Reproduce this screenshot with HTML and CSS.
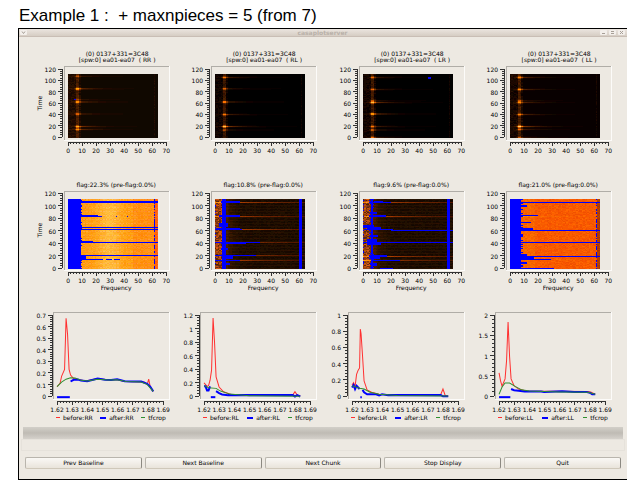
FILE: index.html
```
<!DOCTYPE html>
<html lang="en">
  <head>
    <meta charset="UTF-8" />
    <meta name="viewport" content="width=device-width, initial-scale=1.0" />
    <title>casaplotserver</title>
    <link rel="stylesheet" href="styles.css">
  </head>
  <body>
    <h1>Example 1 :&nbsp; + maxnpieces = 5 (from 7)</h1>

    <main class="window">
      <header class="titlebar">
        <button class="win-btn" aria-label="Menu">
          <svg viewBox="0 0 7 5"><path d="M2 1.5l1.5 2l1.5-2" /></svg>
        </button>
        <span class="win-title">casaplotserver</span>
        <div class="win-controls">
          <button class="win-btn" aria-label="Minimize">
            <svg viewBox="0 0 7 5"><path d="M2 3.5h3" /></svg>
          </button>
          <button class="win-btn" aria-label="Maximize">
            <svg viewBox="0 0 7 5"><path d="M2 1.5h3M2 3.5h3" /></svg>
          </button>
          <button class="win-btn" aria-label="Close">
            <svg viewBox="0 0 7 5"><path d="M2 1l3 3M5 1l-3 3" /></svg>
          </button>
        </div>
      </header>

      <div class="plots" id="plots"></div>

      <div class="toolbar"></div>
      <div class="statusbar"></div>

      <div class="buttons">
        <button class="btn">Prev Baseline</button>
        <button class="btn">Next Baseline</button>
        <button class="btn">Next Chunk</button>
        <button class="btn">Stop Display</button>
        <button class="btn">Quit</button>
      </div>
    </main>

    <script src="charts.js"></script>
  </body>
</html>
```
FILE: styles.css
```
* {
  margin: 0;
  padding: 0;
  box-sizing: border-box;
}

body {
  background: #fff;
  font-family: "DejaVu Sans", Verdana, sans-serif;
  font-size: 6px;
  color: #000;
}

h1 {
  padding: 6px 18px 2px 19px;
  font-family: "Liberation Sans", Arial, sans-serif;
  font-size: 17px;
  font-weight: normal;
  line-height: 20px;
}

.window {
  margin: 0 13px 0 18px;
  background: #ede9e2;
  border: 1px solid #000;
  border-right: none;
}

.titlebar {
  display: flex;
  align-items: center;
  justify-content: space-between;
  height: 8px;
  padding: 0 2px 0 1px;
  background: linear-gradient(#ebe5df, #d6cdc4);
  border-bottom: 1px solid #c9beb5;
}

.win-title {
  padding-left: 18px;
  font-weight: bold;
  line-height: 7px;
  color: #b9b1a9;
}

.win-controls {
  display: flex;
  gap: 2px;
}

.win-btn {
  display: block;
  width: 7px;
  height: 5px;
  background: #f3efeb;
  border: none;
  border-radius: 1px;
}

.win-btn svg {
  display: block;
  width: 100%;
  fill: none;
  stroke: #a79f97;
}

.plots {
  display: grid;
  grid-template-columns: repeat(4, 1fr);
  padding: 10px 13px 0 6px;
}

.plot {
  display: block;
  width: 100%;
}

.plot text {
  font-size: 6px;
  text-anchor: middle;
}

.plot .left {
  text-anchor: start;
}

.plot .right {
  text-anchor: end;
}

.plot path,
.plot polyline {
  fill: none;
  shape-rendering: crispEdges;
}

.plot .axis {
  stroke: #333;
}

.plot .shade {
  stroke: #b0ada7;
}

.plot .light {
  stroke: #fcfbf9;
}

.plot .before {
  stroke: #ff3030;
  stroke-width: 1;
}

.plot .after {
  stroke: #0000ff;
  stroke-width: 2;
}

.plot .fit {
  stroke: #2f8f2f;
  stroke-width: 1;
}

.plot polyline {
  shape-rendering: auto;
}

.toolbar {
  height: 12px;
  margin: 0 4px;
  background: linear-gradient(#d2cfc9, #bfbbb4 50%, #d5d1cb);
}

.statusbar {
  height: 12px;
  margin: 0 2px;
  border: 1px solid #e6e2db;
}

.buttons {
  display: grid;
  grid-template-columns: repeat(5, 1fr);
  gap: 3px;
  padding: 6px 6px 10px;
}

.btn {
  height: 12px;
  background: linear-gradient(#faf8f5, #e9e4db);
  border: 1px solid #b9b5ad;
  border-right-color: #8c8982;
  border-bottom-color: #cfc8ba;
  border-radius: 2px;
  font: inherit;
  line-height: 10px;
}
```
FILE: charts.js
```
const WIDTH = 147;
const CHANNELS = 64;
const BLUE = "#0000ff";

// streaks: [time, strength]
const rawPlots = [
  {
    pol: "RR", base: 18,
    streaks: [[108, 0.35], [86, 1], [67, 0.3], [63, 0.9], [42, 0.6], [20, 0.9], [15, 0.7]],
    flags: [[67, 4, 5]],
  },
  {
    pol: "RL", base: 3,
    streaks: [[106, 0.6], [86, 0.5], [63, 0.8], [41, 0.6], [20, 1.1], [14, 0.4]],
    flags: [],
  },
  {
    pol: "LR", base: 3,
    streaks: [[106, 0.5], [85, 0.5], [65, 0.4], [62, 1], [42, 1.1], [20, 0.6], [14, 0.5], [1, 0.5]],
    flags: [[105, 46, 47]],
  },
  {
    pol: "LL", base: 10,
    streaks: [[106, 0.7], [85, 0.7], [65, 0.4], [62, 0.7], [41, 0.7], [20, 1.2], [15, 0.5], [1, 0.4]],
    flags: [],
  },
];

// flags: [time, first channel, last channel, thickness in time]
const flagPlots = [
  {
    title: "flag:22.3% (pre-flag:0.0%)",
    base: [255, 157, 14], edge: 9, noise: 22, dashed: 61,
    streaks: [],
    flags: [
      [107, 0, 64, 2], [85, 0, 20, 1], [84, 0, 23, 1], [84, 34, 34, 1], [84, 42, 42, 1],
      [66, 0, 63, 1], [64, 0, 64, 1], [63, 0, 26, 2], [42, 0, 64, 1], [43, 0, 17, 2],
      [21, 0, 64, 1], [19, 0, 12, 4], [15, 0, 24, 1], [15, 27, 30, 1], [15, 33, 36, 1], [8, 0, 17, 1],
    ],
  },
  {
    title: "flag:10.8% (pre-flag:0.0%)",
    base: [26, 11, 0], edge: 0, noise: 24, column: [5, 7],
    streaks: [106, 84, 63, 43, 21, 14],
    flags: [
      [107, 4, 17, 2], [85, 3, 17, 2], [84, 4, 13, 2], [70, 3, 8, 6], [65, 1, 17, 2],
      [63, 0, 18, 2], [43, 0, 31, 1], [41, 4, 21, 1], [32, 4, 8, 3], [21, 0, 28, 1],
      [18, 5, 12, 5], [14, 0, 17, 1], [8, 5, 10, 3],
    ],
  },
  {
    title: "flag:9.6% (pre-flag:0.0%)",
    base: [26, 11, 0], edge: 0, noise: 24, column: [6, 6],
    streaks: [106, 84, 20, 14],
    flags: [
      [107, 5, 19, 1], [108, 8, 13, 2], [90, 5, 9, 3], [85, 4, 15, 2], [68, 0, 7, 3], [65, 3, 12, 3],
      [63, 1, 20, 2], [62, 20, 64, 1], [53, 5, 10, 2], [45, 3, 9, 5], [42, 0, 64, 1],
      [40, 3, 12, 4], [21, 4, 16, 2], [18, 5, 11, 5], [14, 7, 25, 1], [7, 6, 9, 4], [1, 12, 20, 1],
    ],
  },
  {
    title: "flag:21.0% (pre-flag:0.0%)",
    base: [248, 90, 2], edge: 8, noise: 24, dashed: 61,
    streaks: [84, 15],
    flags: [
      [107, 0, 64, 1], [101, 0, 11, 2], [85, 0, 19, 1], [74, 0, 14, 1], [64, 0, 15, 4],
      [62, 0, 64, 1], [42, 0, 64, 1], [20, 0, 64, 1], [22, 0, 11, 4], [17, 0, 16, 4],
      [15, 0, 28, 1], [9, 0, 11, 3], [1, 0, 30, 1],
    ],
  },
];

// points: [channel, amplitude]
const linePlots = [
  {
    pol: "RR", max: 0.7, step: 0.1,
    before: [[0, 0.09], [2, 0.12], [3, 0.18], [5, 0.24], [6, 0.68], [7, 0.54], [8, 0.24], [9, 0.19], [11, 0.16], [15, 0.15], [19, 0.14], [27, 0.16], [33, 0.15], [40, 0.15], [45, 0.135], [58, 0.13], [60, 0.11], [61, 0.155], [62, 0.09], [64, 0.05]],
    zero: [[0, 8.5]],
    after: [[9, 0.135], [11, 0.15], [14, 0.152], [16, 0.143], [20, 0.137], [24, 0.15], [27, 0.16], [32, 0.15], [36, 0.148], [40, 0.155], [45, 0.137], [50, 0.135], [56, 0.135], [60, 0.115], [62, 0.09], [64, 0.05]],
    fit: [[0, 0.09], [3, 0.13], [6, 0.155], [9, 0.168], [12, 0.165], [16, 0.145], [20, 0.14], [27, 0.155], [34, 0.148], [40, 0.15], [46, 0.135], [56, 0.13], [60, 0.11], [64, 0.05]],
  },
  {
    pol: "RL", max: 1.2, step: 0.2,
    before: [[0, 0.21], [2, 0.16], [3, 0.17], [4, 0.25], [5, 0.4], [6, 1.17], [7, 0.8], [8, 0.3], [10, 0.15], [13, 0.08], [18, 0.04], [59, 0.03], [60.5, 0.08], [62, 0.03], [64, 0.02]],
    zero: [[4.5, 7.5]],
    after: [[0, 0.16], [1, 0.16], [2, 0.1], [3, 0.1], [4, 0.16], null, [8, 0.09], [10, 0.06], [12, 0.04], [16, 0.03], [59, 0.03], [60.5, 0.01], [62, 0.03], [64, 0.01]],
    fit: [[0, 0.17], [3, 0.14], [8, 0.13], [11, 0.09], [17, 0.045], [30, 0.02], [64, 0.015]],
  },
  {
    pol: "LR", max: 1, step: 0.2,
    before: [[0, 0.15], [1, 0.18], [2, 0.13], [3, 0.28], [4, 0.33], [5, 0.36], [5.5, 0.84], [6, 0.78], [7, 0.5], [8, 0.2], [10, 0.09], [13, 0.06], [18, 0.035], [59, 0.03], [60.5, 0.1], [62, 0.02], [64, 0.01]],
    zero: [[5.5, 6.5]],
    after: [[0, 0.12], [1, 0.15], [2, 0.1], [3, 0.14], [5, 0.1], null, [7, 0.09], [8, 0.06], [10, 0.035], [16, 0.035], [18, 0.02], [20, 0.035], [24, 0.025], [59, 0.025], [60.5, 0.01], [64, 0.01]],
    fit: [[0, 0.14], [5, 0.11], [8, 0.1], [12, 0.06], [18, 0.035], [30, 0.02], [64, 0.015]],
  },
  {
    pol: "LL", max: 2, step: 0.5,
    before: [[0, 0.6], [1, 0.4], [2, 0.27], [4, 0.45], [5, 0.9], [6, 1.85], [7, 1], [8, 0.45], [10, 0.28], [13, 0.2], [18, 0.15], [59, 0.14], [61, 0.13], [64, 0.07]],
    zero: [[0, 7.5]],
    after: [[8, 0.2], [10, 0.17], [13, 0.16], [17, 0.14], [28, 0.14], [30, 0.13], [42, 0.145], [50, 0.13], [58, 0.13], [61, 0.1], [62, 0.07], [64, 0.07]],
    fit: [[0, 0.07], [2, 0.25], [4, 0.35], [7, 0.35], [11, 0.26], [15, 0.18], [20, 0.15], [40, 0.13], [59, 0.12], [64, 0.07]],
  },
];

let seed = 7;
function random() {
  seed = (seed * 16807) % 2147483647;
  return seed / 2147483647;
}

function toColor(rgb) {
  // round to a small palette so that equal cells share one path
  const c = rgb.map((v) => Math.min(255, Math.max(0, Math.round(v / 8) * 8)));
  return `rgb(${c.join(",")})`;
}

// black - brown - orange - yellow - white
function heat(v) {
  return toColor([v * 2, v * 0.9 - 4, v > 190 ? (v - 190) * 2 : 0]);
}

function drawCells(top, height, colorAt) {
  const cell = 90 / CHANNELS;
  const paths = {};
  for (let row = 0; row < height; row++) {
    const time = ((height - row - 0.5) / height) * 112;
    for (let ch = 0; ch < CHANNELS; ch++) {
      const color = colorAt(ch, time, row);
      const x = Math.round(43 + ch * cell);
      const w = Math.round(43 + (ch + 1) * cell) - x;
      paths[color] = (paths[color] || "") + `M${x} ${top + row}h${w}v1h-${w}z`;
    }
  }
  return Object.entries(paths)
    .map(([color, d]) => `<path style="fill:${color}" d="${d}" />`)
    .join("");
}

function text(x, y, label, cls = "") {
  return `<text x="${x}" y="${y}" class="${cls}">${label}</text>`;
}

function drawFrame(left, top, bottom) {
  return `
    <path class="shade" d="M${left + 0.5} ${bottom}V${top + 0.5}H144" />
    <path class="light" d="M${left} ${bottom - 0.5}H144.5V${top}" />`;
}

// horizontal axis: count major steps, five small steps in each
function drawXAxis(x0, x1, y, labels) {
  const count = labels.length - 1;
  let d = `M${x0} ${y + 0.5}H${x1}`;
  for (let i = 0; i <= count * 5; i++) {
    const x = Math.floor(x0 + ((x1 - x0) * i) / (count * 5)) + 0.5;
    d += `M${x} ${y}v${i % 5 ? 2 : 4}`;
  }
  return `<path class="axis" d="${d}" />` +
    labels.map((l, i) => text(x0 + ((x1 - x0) * i) / count, y + 11, l)).join("");
}

function drawYAxis(x, y0, y1, labels) {
  const count = labels.length - 1;
  let d = `M${x + 0.5} ${y0}V${y1}`;
  for (let i = 0; i <= count * 5; i++) {
    const y = Math.floor(y0 + ((y1 - y0) * i) / (count * 5)) + 0.5;
    d += `M${x} ${y}h-${i % 5 ? 2 : 4}`;
  }
  return `<path class="axis" d="${d}" />` +
    labels.map((l, i) => text(x - 6, y0 + ((y1 - y0) * i) / count + 3, l, "right")).join("");
}

function svg(height, content) {
  return `<svg class="plot" viewBox="0 0 ${WIDTH} ${height}">${content}</svg>`;
}

const channelLabels = [0, 10, 20, 30, 40, 50, 60, 70];
const timeLabels = [0, 20, 40, 60, 80, 100, 120];

function timeLabel(y) {
  return `<text transform="translate(17 ${y}) rotate(-90)">Time</text>`;
}

function drawRaw(plot, index) {
  const cells = drawCells(27, 64, (ch, time) => {
    if (plot.flags.some((f) => Math.abs(time - f[0]) < 1 && ch >= f[1] && ch <= f[2])) return BLUE;
    let v = plot.base * 0.5;
    const dist = Math.abs(ch - 6.5);
    for (const [t, strength] of plot.streaks) {
      const near = Math.exp(-(((time - t) / 1.1) ** 2));
      const wide = Math.exp(-(((time - t) / 2) ** 2));
      const fall = ch < 6 ? Math.exp(-dist / 2.5) : Math.exp(-dist / 10);
      v += strength * (near * fall * 75 + wide * Math.exp(-((dist / 1.3) ** 2)) * 130);
    }
    if (dist < 1) v += 15 + random() * 12;
    if (ch < 9) v += random() * 14 * Math.min(1, plot.streaks.length / 7);
    if (ch === 61) v += random() * 10;
    return heat(v);
  });
  return svg(132,
    text(92, 9, "(0) 0137+331=3C48") +
    text(92, 15, `[spw:0] ea01-ea07&#160; ( ${plot.pol} )`) +
    drawFrame(39, 19, 94) + cells +
    drawYAxis(37, 90, 22, timeLabels) +
    drawXAxis(43, 141, 95, channelLabels) +
    (index === 0 ? timeLabel(56) : ""));
}

function drawFlags(plot, index) {
  const dark = plot.column !== undefined;
  let jag = 0;
  let lastRow = -1;
  const cells = drawCells(20, 70, (ch, time, row) => {
    if (row !== lastRow) {
      jag = random();
      lastRow = row;
    }
    if (ch < plot.edge + (jag > 0.75 ? 1 : 0)) return BLUE;
    for (const [t, from, to, thick] of plot.flags) {
      if (Math.abs(time - t) <= thick * 0.5 + 0.3 && ch >= from && ch <= to) return BLUE;
    }
    if (plot.dashed === ch && jag > 0.4) return BLUE;
    if (dark) {
      if (ch >= plot.column[0] && ch <= plot.column[1]) return BLUE;
      if (ch === 60 || ch === 61) return BLUE;
      if (index === 2 && ch > 3 && ch < 8 && random() < 0.18) return BLUE;
    }

    const n = (random() - 0.5) * plot.noise;
    let [r, g, b] = plot.base;
    if (dark) {
      const left = ch < 5 ? 50 + random() * 140 : 90 * Math.exp(-(ch - 5) / 4);
      r += left + n * 0.6 + (row % 3 === 0 ? 12 : 0);
      g += left * 0.42 + n * 0.3 + (row % 3 === 0 ? 5 : 0);
      b += ch < 5 ? random() * 30 : 0;
    } else if (index === 0) {
      const glow = 30 * Math.exp(-(((ch - 29) / 8) ** 2));
      g += glow + n - (ch > 60 ? 55 : ch > 45 ? 12 : 0);
      b += glow * 1.5 + n;
      if (row % 4 === 0 && ch % 2) b += 40;
    } else {
      g += n + (ch < 18 ? 12 : 0);
      r += n * 0.5;
      if (ch > 61) r -= 70, g -= 30;
    }
    for (const t of plot.streaks) {
      if (Math.abs(time - t) < 0.9) {
        const s = Math.exp(-ch / 30);
        r += dark ? 190 * s + 25 : 0;
        g += dark ? 80 * s : 60 * Math.exp(-ch / 18);
      }
    }
    return toColor([r, g, b]);
  });
  return svg(126,
    text(91, 8, plot.title) +
    drawFrame(39, 12, 92) + cells +
    drawYAxis(37, 89, 14, timeLabels) +
    drawXAxis(43, 141, 93, channelLabels) +
    text(91, 111, "Frequency") +
    (index === 0 ? timeLabel(51) : ""));
}

function drawLines(plot) {
  const count = Math.round(plot.max / plot.step);
  const px = (ch) => 32 + ch * 1.5;
  const py = (v) => 92 - (v / plot.max) * 81;
  const line = (cls, points) =>
    `<polyline class="${cls}" points="${points.map(([c, v]) => `${px(c)},${py(v)}`).join(" ")}" />`;

  const gap = plot.after.indexOf(null);
  const after = gap < 0 ? [plot.after] : [plot.after.slice(0, gap), plot.after.slice(gap + 1)];
  const zero = plot.zero.map(([from, to]) => [[from, 0], [to, 0]]);

  const labels = [];
  for (let i = 0; i <= count; i++) labels.push(Number((i * plot.step).toFixed(1)));

  return svg(121,
    drawFrame(28, 7, 95) +
    line("before", plot.before) +
    [...after, ...zero].map((p) => line("after", p)).join("") +
    line("fit", plot.fit) +
    drawYAxis(27, 91, 10, labels) +
    drawXAxis(32, 138, 96, ["1.62", "1.63", "1.64", "1.65", "1.66", "1.67", "1.68", "1.69"]) +
    `<path class="before" d="M31 112.5h4" />` + text(38, 115, `before:${plot.pol}`, "left") +
    `<path class="after" d="M75 113h6" />` + text(84, 115, `after:${plot.pol}`, "left") +
    `<path class="fit" d="M116 112.5h4" />` + text(123, 115, "tfcrop", "left"));
}

document.getElementById("plots").innerHTML =
  rawPlots.map(drawRaw).join("") +
  flagPlots.map(drawFlags).join("") +
  linePlots.map(drawLines).join("");
```
